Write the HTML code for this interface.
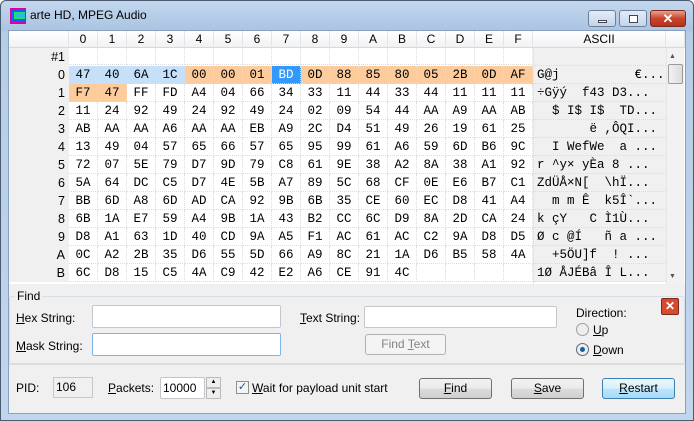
<!DOCTYPE html>
<html><head><meta charset="utf-8"><style>
*{box-sizing:border-box;margin:0;padding:0}
body{width:694px;height:421px;overflow:hidden;font-family:"Liberation Sans",sans-serif;font-size:12px;color:#000;background:#fff}
.a{position:absolute}
.frame{left:0;top:0;width:694px;height:421px;border:1px solid #4a5a70;border-radius:6px 6px 0 0;background:linear-gradient(#c3d7ee,#aac4e2 30px,#b6cde8 31px,#c0d6ec)}
.client{left:8px;top:30px;width:678px;height:384px;background:#f0f0f0;border:1px solid #8aa0bc}
.grid{left:9px;top:31px;width:676px;height:253px;background:#fff;overflow:hidden}
.hd{top:0;height:17px;background:linear-gradient(#fff,#f1f2f4);border-right:1px solid #e2e4e8;border-bottom:1px solid #d5d8dd;text-align:center;line-height:17px;font-size:12px}
.cell{height:17px;line-height:17px;text-align:center;font-family:"Liberation Mono",monospace;font-size:12.5px;border-right:1px dotted #dcdcdc;border-bottom:1px dotted #dcdcdc}
.rl{left:0;width:60px;height:18px;background:#f0f0f0;text-align:right;padding-right:4px;line-height:18px;font-size:12.5px}
.asc{font-family:"Liberation Mono",monospace;font-size:12.5px;line-height:18px;white-space:pre;left:525px;width:132px;background:#f0f0f0;padding-left:3px;height:18px;border-bottom:1px dotted #dcdcdc}
.bl{background:#c6e0fa}.or{background:#fccc9c}.sel{background:#3399ff;color:#fff}
.in{background:#fff;border:1px solid #c3c6cb;border-radius:2px}
.btn{border:1px solid #707070;border-radius:3px;background:linear-gradient(#f2f2f2 0,#ebebeb 50%,#dddddd 51%,#cfcfcf);text-align:center;line-height:19px}
u{text-decoration:underline}
</style></head><body>
<div class="a frame"></div>
<div class="a" style="left:10px;top:8px;width:16px;height:16px;background:#e000a0"><div class="a" style="left:2px;top:2px;width:13px;height:12px;background:#1060ff"></div><div class="a" style="left:4px;top:4px;width:11px;height:7px;background:#20e060"></div><div class="a" style="left:6px;top:6px;width:9px;height:3px;background:#20c0e0"></div></div>
<div class="a" style="left:30px;top:8px;font-size:12px;color:#000">arte HD, MPEG Audio</div>
<div class="a" style="left:588px;top:10px;width:28px;height:17px;border:1px solid #6d7f99;border-radius:3px;background:linear-gradient(#e3ecf7,#c4d5ea)"><div class="a" style="left:9px;top:9px;width:9px;height:3px;background:#fff;border:1px solid #445"></div></div>
<div class="a" style="left:619px;top:10px;width:28px;height:17px;border:1px solid #6d7f99;border-radius:3px;background:linear-gradient(#e3ecf7,#c4d5ea)"><div class="a" style="left:9px;top:4px;width:9px;height:8px;border:1px solid #445;background:#fff"></div></div>
<div class="a" style="left:650px;top:10px;width:36px;height:17px;border:1px solid #7a2a20;border-radius:3px;background:linear-gradient(#e8a090,#c8452e 50%,#b83018);color:#fff;font-weight:bold;text-align:center;line-height:15px;font-size:13px">✕</div>
<div class="a client"></div>
<div class="a grid" id="g"></div>
<div class="a" style="left:9px;top:296px;width:676px;height:68px;border:1px solid #d5dfe5;border-radius:3px"></div>
<div class="a" style="left:15px;top:289px;background:#f0f0f0;padding:0 2px">Find</div>
<div class="a" style="left:16px;top:311px"><u>H</u>ex String:</div>
<div class="a in" style="left:92px;top:305px;width:189px;height:23px"></div>
<div class="a" style="left:16px;top:339px"><u>M</u>ask String:</div>
<div class="a in" style="left:92px;top:333px;width:189px;height:23px;border-color:#7eb4ea"></div>
<div class="a" style="left:300px;top:311px"><u>T</u>ext String:</div>
<div class="a in" style="left:364px;top:306px;width:193px;height:22px"></div>
<div class="a btn" style="left:365px;top:334px;width:81px;height:21px;background:#f4f4f4;border-color:#adb2b5;color:#838383">Find <u>T</u>ext</div>
<div class="a" style="left:576px;top:306px">Direction:</div>
<div class="a" style="left:576px;top:323px;width:13px;height:13px;border-radius:50%;border:1px solid #a0a0a0;background:#eee"></div>
<div class="a" style="left:593px;top:323px"><u>U</u>p</div>
<div class="a" style="left:576px;top:343px;width:13px;height:13px;border-radius:50%;border:1px solid #5a6a80;background:#eee"><div class="a" style="left:3px;top:3px;width:5px;height:5px;border-radius:50%;background:#1a5f9a"></div></div>
<div class="a" style="left:593px;top:343px"><u>D</u>own</div>
<div class="a" style="left:661px;top:298px;width:18px;height:17px;border:1px solid #7a2a20;border-radius:2px;background:#d84a30;color:#fff;font-weight:bold;text-align:center;line-height:15px;font-size:12px">✕</div>
<div class="a" style="left:9px;top:364px;width:676px;height:1px;background:#dcdcdc"></div>
<div class="a" style="left:16px;top:381px">PID:</div>
<div class="a" style="left:53px;top:377px;width:40px;height:21px;border:1px solid #c8c8c8;background:#f0f0f0;padding:2px 0 0 2px">106</div>
<div class="a" style="left:108px;top:381px"><u>P</u>ackets:</div>
<div class="a in" style="left:160px;top:377px;width:45px;height:22px;padding:3px 0 0 2px">10000</div>
<div class="a" style="left:206px;top:377px;width:15px;height:11px;border:1px solid #bbb;background:#eee;font-size:6px;text-align:center;line-height:9px">▲</div>
<div class="a" style="left:206px;top:388px;width:15px;height:11px;border:1px solid #bbb;background:#eee;font-size:6px;text-align:center;line-height:9px">▼</div>
<div class="a" style="left:236px;top:381px;width:13px;height:13px;border:1px solid #8f8f8f;background:#f4f4f4;font-size:11px;line-height:11px;text-align:center;color:#2a4a8a">✓</div>
<div class="a" style="left:252px;top:381px"><u>W</u>ait for payload unit start</div>
<div class="a btn" style="left:419px;top:378px;width:73px;height:21px"><u>F</u>ind</div>
<div class="a btn" style="left:511px;top:378px;width:73px;height:21px"><u>S</u>ave</div>
<div class="a btn" style="left:602px;top:378px;width:73px;height:21px;border-color:#3c7fb1;background:linear-gradient(#eaf6fd,#d9f0fc 50%,#bee6fd 51%,#a7d9f5)"><u>R</u>estart</div>
<script>
var rows=[
"47 40 6A 1C 00 00 01 BD 0D 88 85 80 05 2B 0D AF",
"F7 47 FF FD A4 04 66 34 33 11 44 33 44 11 11 11",
"11 24 92 49 24 92 49 24 02 09 54 44 AA A9 AA AB",
"AB AA AA A6 AA AA EB A9 2C D4 51 49 26 19 61 25",
"13 49 04 57 65 66 57 65 95 99 61 A6 59 6D B6 9C",
"72 07 5E 79 D7 9D 79 C8 61 9E 38 A2 8A 38 A1 92",
"5A 64 DC C5 D7 4E 5B A7 89 5C 68 CF 0E E6 B7 C1",
"BB 6D A8 6D AD CA 92 9B 6B 35 CE 60 EC D8 41 A4",
"6B 1A E7 59 A4 9B 1A 43 B2 CC 6C D9 8A 2D CA 24",
"D8 A1 63 1D 40 CD 9A A5 F1 AC 61 AC C2 9A D8 D5",
"0C A2 2B 35 D6 55 5D 66 A9 8C 21 1A D6 B5 58 4A",
"6C D8 15 C5 4A C9 42 E2 A6 CE 91 4C"];
var asc=["G@j          €...","÷Gÿý  f43 D3...","  $ I$ I$  TD...","          ë ,ÔQI...".slice(0),"  I WefWe  a ...","r ^y× yÈa 8 ...","ZdÜÅ×N[  \\hÏ...","  m m Ê  k5Î`...","k çY   C Ì1Ù...","Ø c @Í   ñ a ...","  +5ÖU]f  ! ...","1Ø ÅJÉBâ Î L..."];
asc[3]="       ë ,ÔQI...";
var h='';var lab="0123456789ABCDEF";
h+='<div class="a hd" style="left:0;width:60px"></div>';
for(var i=0;i<16;i++)h+='<div class="a hd" style="left:'+(60+29*i)+'px;width:29px">'+lab[i]+'</div>';
h+='<div class="a hd" style="left:524px;width:133px">ASCII</div><div class="a hd" style="left:657px;width:19px"></div>';
h+='<div class="a rl" style="top:17px">#1</div>';
for(var i=0;i<16;i++)h+='<div class="a cell" style="left:'+(60+29*i)+'px;top:17px;width:29px"></div>';
h+='<div class="a asc" style="top:17px"></div>';
for(var r=0;r<12;r++){var t=35+18*r;h+='<div class="a rl" style="top:'+t+'px">'+lab[r]+'</div>';
var c=rows[r].split(' ');
for(var i=0;i<16;i++){var cl='';if(r==0){cl=i<4?'bl':(i==7?'sel':'or')}if(r==1&&i<2)cl='or';
h+='<div class="a cell '+cl+'" style="left:'+(60+29*i)+'px;top:'+t+'px;width:29px;height:18px;line-height:18px">'+(c[i]||'')+'</div>';}
h+='<div class="a asc" style="top:'+t+'px">'+asc[r]+'</div>';}
for(var r=0;r<3;r++){}
h+='<div class="a" style="left:524px;top:17px;width:1px;height:236px;background:#e6e6e6"></div>';
h+='<div class="a" style="left:657px;top:17px;width:18px;height:236px;background:#f2f2f2;border-left:1px solid #e6e6e6"></div>';
h+='<div class="a" style="left:660px;top:22px;font-size:7px;color:#555">▲</div>';
h+='<div class="a" style="left:659px;top:33px;width:15px;height:20px;border:1px solid #9a9a9a;border-radius:2px;background:linear-gradient(90deg,#f2f2f2,#dcdcdc)"></div>';
h+='<div class="a" style="left:660px;top:242px;font-size:7px;color:#555">▼</div>';
document.getElementById('g').innerHTML=h;
</script>
</body></html>
